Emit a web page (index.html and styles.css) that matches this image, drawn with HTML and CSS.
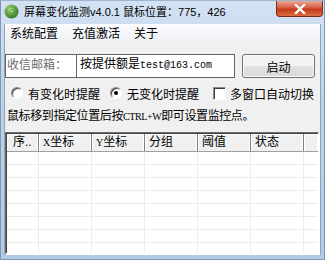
FILE: index.html
```html
<!DOCTYPE html>
<html lang="zh-CN">
<head>
    <meta charset="UTF-8">
    <title>屏幕变化监测</title>
    <link rel="stylesheet" href="styles.css">
</head>
<body>
    <div class="window">
        <div class="titlebar">
            <svg class="app-icon" width="15" height="15" viewBox="0 0 16 16">
                <defs>
                    <radialGradient id="g" cx="40%" cy="35%" r="70%">
                        <stop offset="0" stop-color="#cfe9b8"/>
                        <stop offset="0.5" stop-color="#6fae4c"/>
                        <stop offset="1" stop-color="#2f6e27"/>
                    </radialGradient>
                </defs>
                <circle cx="8" cy="8" r="7.5" fill="url(#g)"/>
                <circle cx="8" cy="8" r="5" fill="none" stroke="#4a8a36" stroke-width="0.8"/>
                <circle cx="8" cy="8" r="2.6" fill="none" stroke="#4a8a36" stroke-width="0.8"/>
            </svg>
            <span class="title">屏幕变化监测v4.0.1 鼠标位置：775，426</span>
            <div class="close-btn">
                <svg width="12" height="10" viewBox="0 0 12 10">
                    <path d="M2 1 L10 9 M10 1 L2 9" stroke="#fff" stroke-width="2.4" stroke-linecap="square"/>
                </svg>
            </div>
        </div>

        <div class="client">
            <div class="menubar">
                <span class="menu-item">系统配置</span>
                <span class="menu-item">充值激活</span>
                <span class="menu-item">关于</span>
            </div>

            <div class="mail-row">
                <div class="mail-box">
                    <span class="mail-label">收信邮箱：</span>
                    <span class="mail-input">按提供额是<span class="ascii">test@163.com</span></span>
                </div>
                <button class="btn">启动</button>
            </div>

            <div class="option-row">
                <span class="radio"></span>
                <span class="opt-text">有变化时提醒</span>
                <span class="radio checked"></span>
                <span class="opt-text">无变化时提醒</span>
                <span class="checkbox"></span>
                <span class="opt-text">多窗口自动切换</span>
            </div>

            <div class="hint">鼠标移到指定位置后按<span class="ascii-s">CTRL+W</span>即可设置监控点。</div>

            <div class="listview">
                <div class="lv-head">
                    <span class="col c1">序..</span>
                    <span class="col"><span class="ascii-s">X</span>坐标</span>
                    <span class="col"><span class="ascii-s">Y</span>坐标</span>
                    <span class="col">分组</span>
                    <span class="col">阈值</span>
                    <span class="col">状态</span>
                    <span class="col last"></span>
                </div>
                <div class="lv-body">
                    <div class="lv-row"><span class="cell c1"></span><span class="cell"></span><span class="cell"></span><span class="cell"></span><span class="cell"></span><span class="cell"></span><span class="cell last"></span></div>
                    <div class="lv-row"><span class="cell c1"></span><span class="cell"></span><span class="cell"></span><span class="cell"></span><span class="cell"></span><span class="cell"></span><span class="cell last"></span></div>
                    <div class="lv-row"><span class="cell c1"></span><span class="cell"></span><span class="cell"></span><span class="cell"></span><span class="cell"></span><span class="cell"></span><span class="cell last"></span></div>
                    <div class="lv-row"><span class="cell c1"></span><span class="cell"></span><span class="cell"></span><span class="cell"></span><span class="cell"></span><span class="cell"></span><span class="cell last"></span></div>
                    <div class="lv-row"><span class="cell c1"></span><span class="cell"></span><span class="cell"></span><span class="cell"></span><span class="cell"></span><span class="cell"></span><span class="cell last"></span></div>
                    <div class="lv-row"><span class="cell c1"></span><span class="cell"></span><span class="cell"></span><span class="cell"></span><span class="cell"></span><span class="cell"></span><span class="cell last"></span></div>
                    <div class="lv-row"><span class="cell c1"></span><span class="cell"></span><span class="cell"></span><span class="cell"></span><span class="cell"></span><span class="cell"></span><span class="cell last"></span></div>
                    <div class="lv-row"><span class="cell c1"></span><span class="cell"></span><span class="cell"></span><span class="cell"></span><span class="cell"></span><span class="cell"></span><span class="cell last"></span></div>
                </div>
            </div>
        </div>
    </div>
</body>
</html>
```

FILE: styles.css
```css
body {
    margin: 0;
    padding: 0;
    font-family: "Liberation Sans", "Noto Sans CJK SC", sans-serif;
    font-size: 12px;
    color: #000;
    overflow: hidden;
}

.window {
    width: 325px;
    height: 260px;
    box-sizing: border-box;
    display: flex;
    flex-direction: column;
    background: linear-gradient(#d3e2f3, #bcd2ea 40%, #b4cbe6);
    border: 1px solid #7f97b5;
    border-top-color: #9fb4cd;
}

.titlebar {
    height: 23px;
    display: flex;
    align-items: flex-start;
    flex-shrink: 0;
}

.app-icon {
    margin: 3px 0 0 3px;
}

.title {
    margin: 3px 0 0 5px;
    font-size: 11px;
    line-height: 16px;
    white-space: nowrap;
}

.close-btn {
    margin-left: auto;
    margin-right: 1px;
    width: 47px;
    height: 16px;
    display: flex;
    align-items: center;
    justify-content: center;
    background: linear-gradient(#eaa898, #d65c3e 45%, #c23b1a 55%, #dc6e42);
    border: 1px solid #7a2a1c;
    border-top: none;
    border-radius: 0 0 4px 4px;
    box-sizing: border-box;
}

.client {
    flex: 1;
    margin: 0 3px 4px 3px;
    background: #f0f0f0;
    border: 1px solid #8da3bd;
    border-top: none;
    display: flex;
    flex-direction: column;
    min-height: 0;
}

.menubar {
    height: 17px;
    display: flex;
    align-items: center;
    gap: 14px;
    padding-left: 5px;
    background: linear-gradient(#fafbfd, #eef0f4);
    border-top: 1px solid #fff;
}

.menu-item {
    line-height: 16px;
}

.mail-row {
    display: flex;
    margin-top: 12px;
    height: 24px;
}

.mail-box {
    width: 230px;
    display: flex;
    border: 1px solid #646464;
    background: #fff;
    box-sizing: border-box;
}

.mail-label {
    width: 69px;
    padding-left: 1px;
    color: #6d6d6d;
    border-right: 1px solid #646464;
    line-height: 20px;
    font-size: 12px;
}

.mail-input {
    padding: 0 0 0 3px;
    line-height: 18px;
}

.ascii {
    font-family: "Liberation Mono", monospace;
    font-size: 10px;
}

.ascii-s {
    font-family: "Liberation Serif", serif;
    font-size: 10px;
}

.btn {
    margin-left: 7px;
    width: 73px;
    height: 24px;
    padding: 0;
    font: inherit;
    border: 1px solid #707070;
    border-radius: 3px;
    background: linear-gradient(#f2f2f2 50%, #e2e2e2 50%, #d8d8d8);
    box-shadow: inset 0 0 0 1px #fcfcfc;
}

.option-row {
    display: flex;
    align-items: center;
    margin-top: 7px;
    height: 16px;
}

.radio {
    width: 12px;
    height: 12px;
    box-sizing: border-box;
    border-radius: 50%;
    border: 1px solid;
    border-color: #8a8a8a #fff #fff #8a8a8a;
    background: #fff;
    box-shadow: inset 1px 1px 0 #404040;
    margin: 0 5px 0 6px;
    position: relative;
}

.radio.checked {
    margin-left: 10px;
}

.radio.checked::after {
    content: "";
    position: absolute;
    left: 3px;
    top: 3px;
    width: 4px;
    height: 4px;
    border-radius: 50%;
    background: #000;
}

.checkbox {
    width: 13px;
    height: 13px;
    box-sizing: border-box;
    border: 1px solid;
    border-color: #8a8a8a #fff #fff #8a8a8a;
    background: #fff;
    box-shadow: inset 1px 1px 0 #404040;
    margin: 0 4px 0 14px;
}

.hint {
    margin: 7px 0 0 2px;
    line-height: 16px;
    letter-spacing: -0.4px;
}

.listview {
    margin-top: 7px;
    flex: 1;
    min-height: 0;
    border: 1px solid;
    border-color: #6e6e6e #fff #fff #6e6e6e;
    box-shadow: inset 1px 1px 0 #404040, 1px 1px 0 #fff;
    background: #fff;
    overflow: hidden;
    margin-right: 1px;
}

.lv-head {
    display: flex;
    height: 17px;
    margin: 1px 0 0 1px;
    background: #f0f0f0;
    border-bottom: 1px solid #a0a0a0;
}

.col {
    width: 53px;
    box-sizing: border-box;
    padding-left: 4px;
    border-right: 1px solid #808080;
    box-shadow: inset -1px 0 0 #fff, inset 1px 1px 0 #fff;
    line-height: 17px;
    white-space: nowrap;
}

.col.c1 {
    width: 32px;
    padding-left: 6px;
}

.col.last,
.cell.last {
    flex: 1;
    border-right: none;
}

.lv-body {
    margin-left: 1px;
}

.lv-row {
    display: flex;
    height: 13px;
    border-bottom: 1px solid #ececec;
    box-sizing: border-box;
}

.cell {
    width: 53px;
    box-sizing: border-box;
    border-right: 1px solid #ececec;
}

.cell.c1 {
    width: 32px;
}
```
